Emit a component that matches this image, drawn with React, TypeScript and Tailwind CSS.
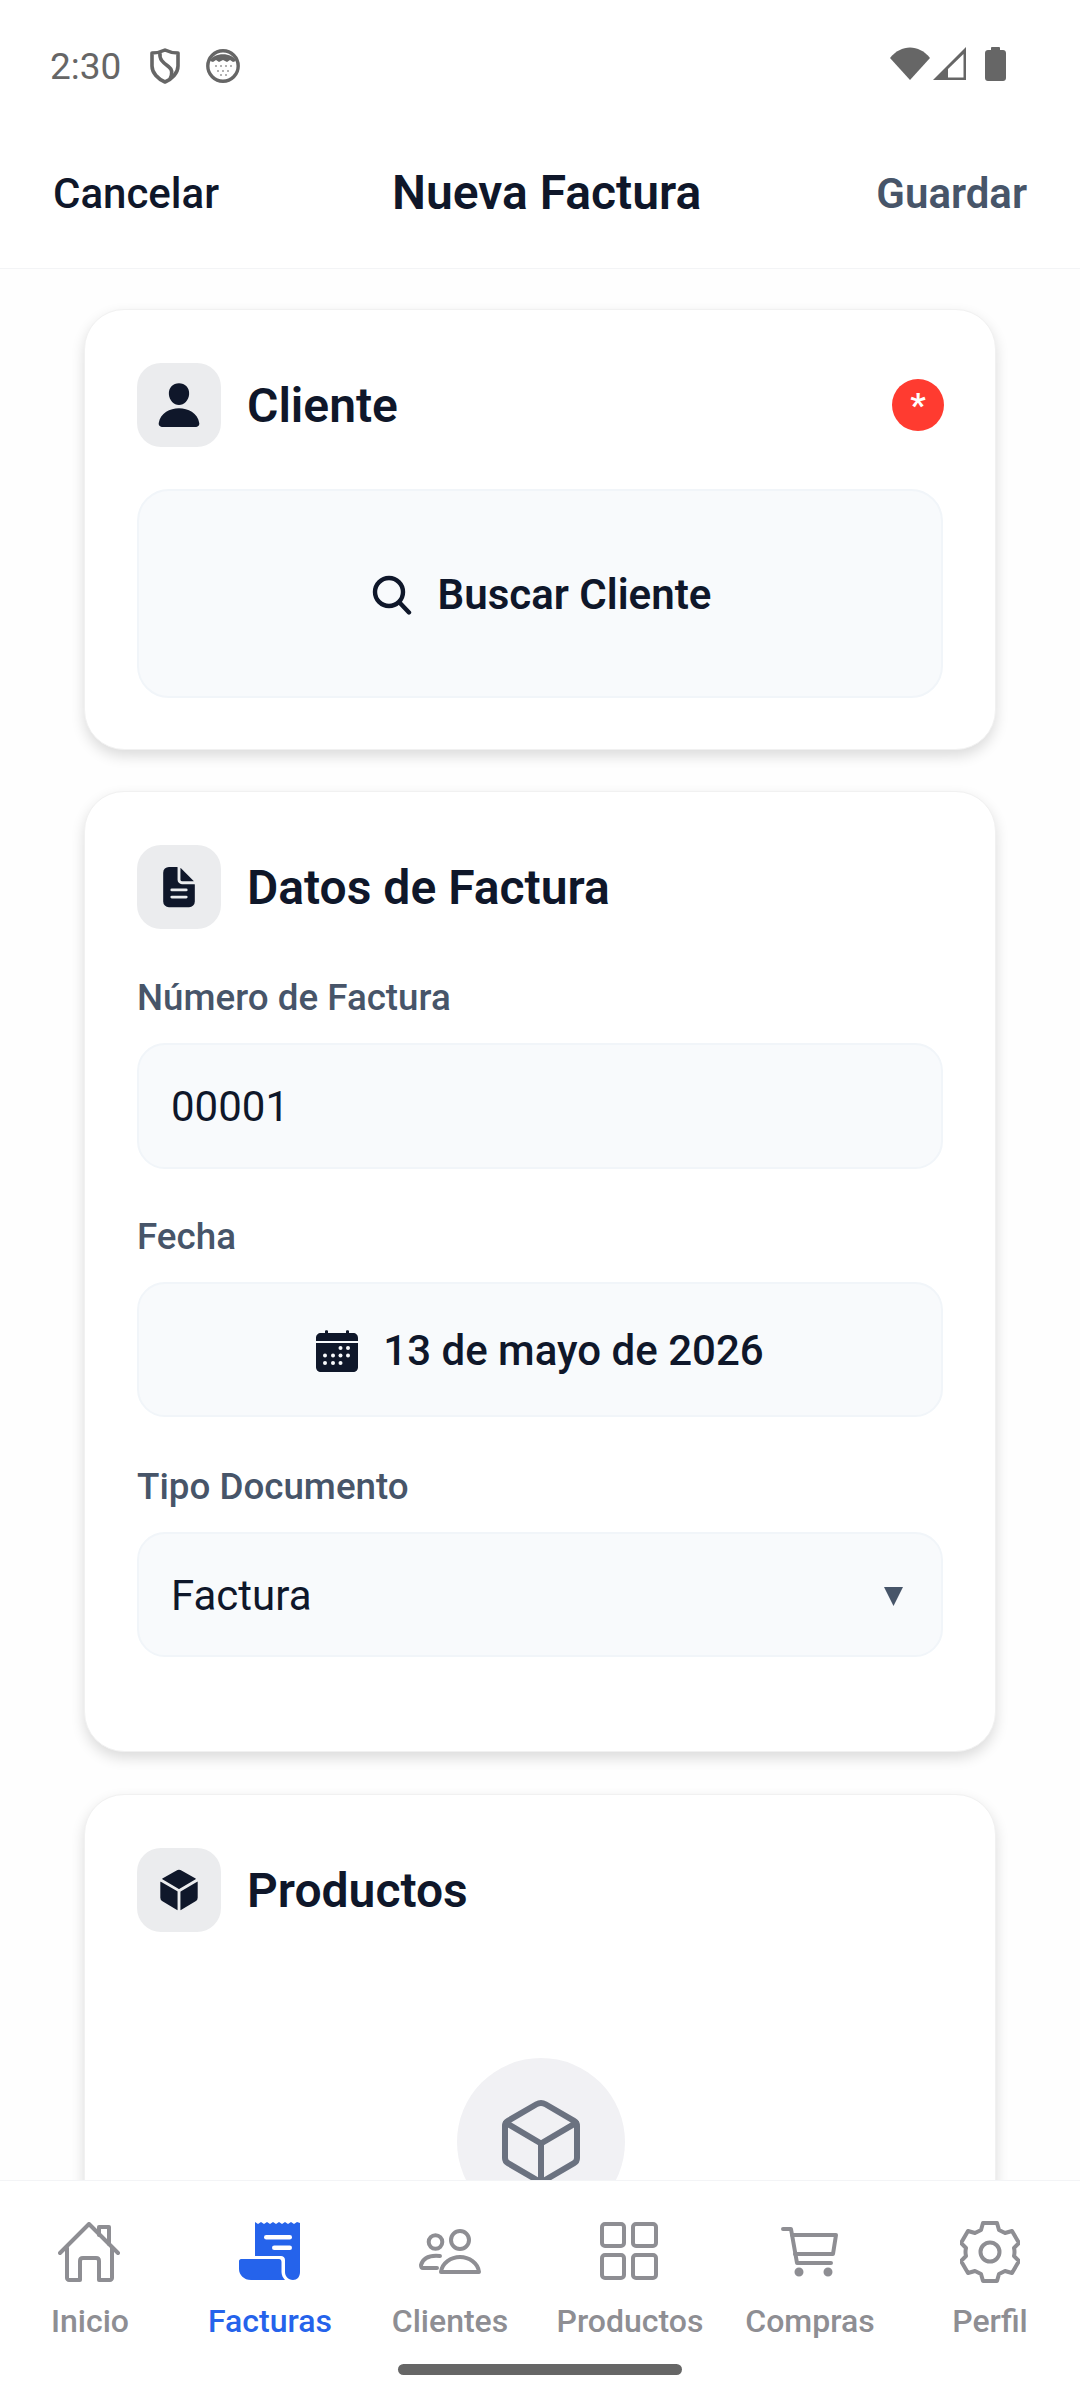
import React from "react";
import { IoPerson, IoDocumentText, IoCube, IoCubeOutline } from "react-icons/io5";

const roboto = "font-['Roboto',sans-serif]";

function ShieldIcon() {
  return (
    <svg width="30" height="36" viewBox="0 0 30 36" fill="none" stroke="#666" strokeWidth="3.6">
      <path d="M15 2 C19 4 24 5 28 5 V18 C28 25 22 31 15 34 C8 31 2 25 2 18 V5 C6 5 11 4 15 2Z" strokeLinejoin="round" />
      <path d="M10 5 C9 12 14 15 19 19 C23 22 22 27 20 31" />
    </svg>
  );
}
function FaceIcon() {
  return (
    <svg width="34" height="34" viewBox="0 0 34 34">
      <circle cx="17" cy="17" r="15.2" fill="#fff" stroke="#666" strokeWidth="3.4" />
      <path d="M4 12 C7 3 27 3 30 12 L27 13 L24 11 L21 13 L17 11 L13 13 L10 11 L7 13Z" fill="#666" />
      <g fill="#999">
        <circle cx="10" cy="17" r="1" /><circle cx="15" cy="17" r="1" /><circle cx="20" cy="17" r="1" /><circle cx="25" cy="17" r="1" />
        <circle cx="12" cy="22" r="1" /><circle cx="17" cy="22" r="1" /><circle cx="22" cy="22" r="1" /><circle cx="15" cy="26" r="1" /><circle cx="20" cy="26" r="1" />
      </g>
    </svg>
  );
}
function Wifi() {
  return (
    <svg width="40" height="33" viewBox="0 0 40 33"><path d="M0 11 C11 -3 29 -3 40 11 L20 33Z" fill="#666" /></svg>
  );
}
function Signal() {
  return (
    <svg width="33" height="33" viewBox="0 0 33 33">
      <path d="M33 0 V33 H0Z" fill="#666" />
      <path d="M30.5 7 V30.5 H15 V22Z" fill="#fff" />
    </svg>
  );
}
function Battery() {
  return (
    <svg width="21" height="34" viewBox="0 0 21 34">
      <path d="M6 3 V1 C6 .5 6.5 0 7 0 H14 C14.5 0 15 .5 15 1 V3 H18 C19.7 3 21 4.3 21 6 V31 C21 32.7 19.7 34 18 34 H3 C1.3 34 0 32.7 0 31 V6 C0 4.3 1.3 3 3 3Z" fill="#666" />
    </svg>
  );
}
function SearchIcon() {
  return (
    <svg width="40" height="40" viewBox="0 0 40 40" fill="none" stroke="#0f172a" strokeWidth="4.4" strokeLinecap="round">
      <circle cx="17" cy="17" r="14" />
      <path d="M27.5 27.5 L37 37.5" />
    </svg>
  );
}
function CalendarIcon() {
  return (
    <svg width="42" height="42" viewBox="0 0 42 42">
      <path d="M9 1 C9 0 12 0 12 1 V3 H30 V1 C30 0 33 0 33 1 V3 H37 C40 3 42 5 42 8 V11 H0 V8 C0 5 2 3 5 3 H9Z" fill="#0f172a" />
      <path d="M0 13 H42 V37 C42 40 40 42 37 42 H5 C2 42 0 40 0 37Z" fill="#0f172a" />
      <g fill="#f8fafc">
        <circle cx="24.5" cy="18" r="2" /><circle cx="32" cy="18" r="2" />
        <circle cx="9" cy="25.5" r="2" /><circle cx="17" cy="25.5" r="2" /><circle cx="24.5" cy="25.5" r="2" /><circle cx="32" cy="25.5" r="2" />
        <circle cx="9" cy="33" r="2" /><circle cx="17" cy="33" r="2" /><circle cx="24.5" cy="33" r="2" />
      </g>
    </svg>
  );
}

const stroke = { fill: "none", stroke: "#8e8e93", strokeWidth: 4, strokeLinecap: "round" as const, strokeLinejoin: "round" as const };

function HomeTab() {
  return (
    <svg width="64" height="60" viewBox="0 0 64 60" {...stroke}>
      <path d="M2 31 L31 2 L60 31" />
      <path d="M9 26 V56 C9 57 10 58 11 58 H22 V39 C22 37 23 36 25 36 H38 C40 36 41 37 41 39 V58 H52 C53 58 54 57 54 56 V26" />
      <path d="M41 13 V5 H51 V22" />
    </svg>
  );
}
function ReceiptTab() {
  return (
    <svg width="62" height="60" viewBox="0 0 62 60">
      <path d="M16 0 L19 2 L22 0 L25 2 L28 0 L31 2 L34 0 L37 2 L40 0 L43 2 L46 0 L49 2 L52 0 L55 2 L58 0 L61 1 V50 C61 55 58 58 54 58 C49 58 46 54 46 50 V38 C46 35.5 44 34 42 34 H16Z" fill="#2563eb" />
      <path d="M2 37 H40 C41.5 37 42.5 38 42.5 40 V50 C42.5 53 44 56 46 58 H12 C5 58 0 53 0 47 V39 C0 38 1 37 2 37Z" fill="#2563eb" />
      <rect x="25" y="13" width="28" height="4.5" rx="2.25" fill="#fff" />
      <rect x="33" y="23.5" width="20" height="4.5" rx="2.25" fill="#fff" />
    </svg>
  );
}
function UsersTab() {
  return (
    <svg width="64" height="50" viewBox="0 0 64 50" {...stroke}>
      <circle cx="17.5" cy="15" r="6.8" />
      <circle cx="42" cy="13" r="9" />
      <path d="M22 29 C12 28 5 31 3 38 C3 40 4 41 5 41 H19" />
      <path d="M23 45 C24 36 33 30 42 30 C51 30 60 36 61 45 Z" />
    </svg>
  );
}
function GridTab() {
  return (
    <svg width="60" height="60" viewBox="0 0 60 60" {...stroke}>
      <rect x="2" y="2" width="22" height="22" rx="3" />
      <rect x="33" y="2" width="23" height="22" rx="3" />
      <rect x="2" y="33" width="22" height="23" rx="3" />
      <rect x="33" y="33" width="23" height="23" rx="3" />
    </svg>
  );
}
function CartTab() {
  return (
    <svg width="58" height="52" viewBox="0 0 58 52" {...stroke}>
      <path d="M2 3 H10 L16 37 H50" />
      <path d="M11 9 H55 L52 28 H14" />
      <circle cx="18" cy="46" r="2.5" fill="#8e8e93" />
      <circle cx="47" cy="46" r="2.5" fill="#8e8e93" />
    </svg>
  );
}
function GearTab() {
  return (
    <svg width="60" height="62" viewBox="0 0 60 62" {...stroke}>
      <circle cx="30" cy="31" r="9.5" />
      <path d="M23 2 H37 L39 9 C41 10 43 11 45 12 L52 10 L59 22 L54 27 C54.5 29 54.5 33 54 35 L59 40 L52 52 L45 50 C43 51 41 52 39 53 L37 60 H23 L21 53 C19 52 17 51 15 50 L8 52 L1 40 L6 35 C5.5 33 5.5 29 6 27 L1 22 L8 10 L15 12 C17 11 19 10 21 9Z" />
    </svg>
  );
}

function CardTitle({ icon, title, badge }: { icon: React.ReactNode; title: string; badge?: boolean }) {
  return (
    <div className="flex items-center h-[84px]">
      <div className="w-[84px] h-[84px] rounded-[24px] bg-[#ebecee] flex items-center justify-center">{icon}</div>
      <h2 className={`${roboto} ml-[26px] pt-[2px] text-[#0f172a] text-[48px] font-semibold leading-none flex-1`}>{title}</h2>
      {badge && (
        <div className="w-[52px] h-[52px] rounded-full bg-[#ff3b30] flex items-center justify-center mr-[-1px]">
          <span className={`${roboto} text-white text-[34px] font-bold leading-[42px]`}>*</span>
        </div>
      )}
    </div>
  );
}

function Label({ children }: { children: React.ReactNode }) {
  return <div className={`${roboto} text-[#475569] text-[36.75px] font-medium leading-[42px] mb-[24px]`}>{children}</div>;
}

const boxCls = "w-full bg-[#f8fafc] border-2 border-[#f1f5f9] flex items-center";

function Tab({ icon, label, active }: { icon: React.ReactNode; label: string; active?: boolean }) {
  return (
    <div className="w-[180px] flex flex-col items-center">
      <div className="h-[62px] flex items-center justify-center">{icon}</div>
      <span className={`${roboto} font-medium text-[32px] leading-[40px] mt-[18px] ${active ? "text-[#2563eb]" : "text-[#8e8e93]"}`}>{label}</span>
    </div>
  );
}

const cardCls = "bg-white rounded-[40px] border border-[#f1f1f1] shadow-[0_6px_14px_rgba(0,0,0,0.14)] px-[52px] pt-[53px]";

export default function App() {
  return (
    <div className="w-[1080px] h-[2400px] bg-[#fefefe] flex flex-col overflow-hidden">
      <div className="h-[116px] bg-white flex items-start justify-between pt-[47px] pl-[50px] pr-[74px]">
        <div className="flex items-center h-[36px] mt-[1px]">
          <span className={`${roboto} text-[37px] leading-none text-[#666] w-[100px]`}>2:30</span>
          <ShieldIcon />
          <div className="w-[26px]" />
          <FaceIcon />
        </div>
        <div className="flex items-start">
          <Wifi />
          <div className="w-[3px]" />
          <Signal />
          <div className="w-[19px]" />
          <Battery />
        </div>
      </div>

      <header className="h-[153px] bg-white border-b border-[#f3f4f6] relative flex items-center justify-between pl-[53px] pr-[53px] pt-[2px]">
        <span className={`${roboto} text-[42px] font-medium text-[#0f172a]`}>Cancelar</span>
        <span className={`${roboto} absolute left-[392px] text-[48px] font-semibold text-[#0f172a]`}>Nueva Factura</span>
        <span className={`${roboto} text-[42px] font-semibold text-[#475569]`}>Guardar</span>
      </header>

      <main className="flex-1 overflow-hidden px-[84px] pt-[40px]">
        <section className={`${cardCls} h-[441px]`}>
          <CardTitle icon={<IoPerson size={50} color="#0f172a" />} title="Cliente" badge />
          <div className={`${boxCls} h-[209px] mt-[42px] rounded-[32px] justify-center pl-[3px] pt-[2px]`}>
            <SearchIcon />
            <span className={`${roboto} ml-[26px] text-[42px] font-semibold text-[#0f172a]`}>Buscar Cliente</span>
          </div>
        </section>

        <section className={`${cardCls} h-[961px] mt-[41px]`}>
          <CardTitle icon={<IoDocumentText size={46} color="#0f172a" />} title="Datos de Factura" />
          <div className="mt-[48px]">
            <Label>Número de Factura</Label>
            <div className={`${boxCls} h-[126px] rounded-[28px] pl-[32px]`}>
              <span className={`${roboto} text-[#0f172a] text-[42px]`}>00001</span>
            </div>
          </div>
          <div className="mt-[47px]">
            <Label>Fecha</Label>
            <div className={`${boxCls} h-[135px] rounded-[28px] justify-center pt-[2px]`}>
              <CalendarIcon />
              <span className={`${roboto} ml-[25px] text-[#0f172a] text-[42px] font-medium`}>13 de mayo de 2026</span>
            </div>
          </div>
          <div className="mt-[49px]">
            <Label>Tipo Documento</Label>
            <div className={`${boxCls} h-[125px] rounded-[28px] pl-[32px] pr-[38px] pt-[2px] justify-between`}>
              <span className={`${roboto} text-[#0f172a] text-[42px]`}>Factura</span>
              <svg className="mt-[2px]" width="19" height="19" viewBox="0 0 19 19"><path d="M0 0 H19 L9.5 19Z" fill="#475569" /></svg>
            </div>
          </div>
        </section>

        <section className={`${cardCls} h-[600px] mt-[42px]`}>
          <CardTitle icon={<IoCube size={46} color="#0f172a" />} title="Productos" />
          <div className="mt-[126px] ml-[320px] w-[168px] h-[168px] rounded-full bg-[#f1f1f4] flex items-center justify-center">
            <IoCubeOutline size={96} color="#6b7280" />
          </div>
        </section>
      </main>

      <nav className="h-[220px] bg-white border-t border-[#f3f4f6] relative flex items-start pt-[40px]">
        <Tab icon={<HomeTab />} label="Inicio" />
        <Tab icon={<ReceiptTab />} label="Facturas" active />
        <Tab icon={<UsersTab />} label="Clientes" />
        <Tab icon={<GridTab />} label="Productos" />
        <Tab icon={<CartTab />} label="Compras" />
        <Tab icon={<GearTab />} label="Perfil" />
        <div className="absolute left-[398px] top-[183px] w-[284px] h-[11px] rounded-full bg-[#666]" />
      </nav>
    </div>
  );
}
